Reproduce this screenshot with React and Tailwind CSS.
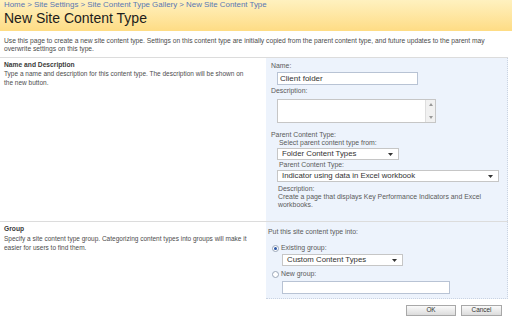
export default function App() {
  const body = "text-[6.5px] leading-[8.5px] text-[#4c4c4c] whitespace-nowrap";
  const label = "text-[6.9px] leading-[8px] text-[#5a5a5a]";

  const Select = ({ w, text }) => (
    <div
      className={`${w} h-[12px] bg-white border border-[#c6c6c6] flex items-center justify-between pl-[4px] pr-[5px]`}
    >
      <span className="text-[7.8px] text-[#333] leading-none">{text}</span>
      <svg width="5" height="3" viewBox="0 0 5 3">
        <path d="M0 0h5L2.5 3z" fill="#333" />
      </svg>
    </div>
  );

  const Radio = ({ on }) => (
    <span className="w-[7px] h-[7px] rounded-full border border-[#9aa6b8] bg-white flex items-center justify-center">
      {on && <span className="w-[3px] h-[3px] rounded-full bg-[#2a56a6]" />}
    </span>
  );

  return (
    <div
      className="w-[512px] h-[323px] bg-white overflow-hidden"
      style={{ fontFamily: '"Liberation Sans", Arial, sans-serif' }}
    >
      {/* Title band */}
      <div className="h-[31px] bg-gradient-to-b from-[#fff1bf] to-[#fedc84] px-[4px] pt-[1px]">
        <div className="text-[7.9px] leading-[8px] text-[#5977b4]">
          Home &gt; Site Settings &gt; Site Content Type Gallery &gt; New Site Content Type
        </div>
        <div className="text-[14px] leading-[18px] text-[#1c1c1c]">New Site Content Type</div>
      </div>

      {/* Intro */}
      <div className={`${body} text-[6.7px] leading-[8px] px-[4px] pt-[6px] h-[26px]`}>
        Use this page to create a new site content type. Settings on this content type are initially copied from the
        parent content type, and future updates to the parent may
        <br />
        overwrite settings on this type.
      </div>

      {/* Section 1 */}
      <div className="flex border-t border-[#dcdcdc] mr-[4px]">
        <div className="w-[266px] pl-[4px] pt-[3px]">
          <div className="text-[6.7px] leading-[8px] font-bold text-[#3a3a3a]">Name and Description</div>
          <div className={`${body} mt-[1px]`}>
            Type a name and description for this content type. The description will be shown on
            <br />
            the new button.
          </div>
        </div>
        <div className="flex-1 h-[163px] bg-[#edf3fc] border-r border-dotted border-[#c9d3e2] pl-[5px] pt-[4px]">
          <div className={label}>Name:</div>
          <div className="w-[141px] h-[13px] mt-[2px] ml-[6px] bg-white border border-[#b8c3d4] flex items-center pl-[2px]">
            <span className="text-[8px] leading-none text-[#333]">Client folder</span>
          </div>
          <div className={`${label} mt-[2px]`}>Description:</div>
          <div className="w-[159px] h-[24px] mt-[4px] ml-[6px] bg-white border border-[#c6c6c6] flex justify-end">
            <div className="w-[10px] bg-[#f1f1f1] border-l border-[#dedede] flex flex-col justify-between items-center py-[3px]">
              <svg width="4" height="3" viewBox="0 0 4 3">
                <path d="M0 3h4L2 0z" fill="#999" />
              </svg>
              <svg width="4" height="3" viewBox="0 0 4 3">
                <path d="M0 0h4L2 3z" fill="#999" />
              </svg>
            </div>
          </div>
          <div className={`${label} mt-[8px]`}>Parent Content Type:</div>
          <div className="ml-[6px]">
            <div className={`${label} pl-[2px]`}>Select parent content type from:</div>
            <div className="mt-[1px]">
              <Select w="w-[122px]" text="Folder Content Types" />
            </div>
            <div className={`${label} pl-[2px] mt-[1px]`}>Parent Content Type:</div>
            <div className="mt-[1px]">
              <Select w="w-[222px]" text="Indicator using data in Excel workbook" />
            </div>
            <div className={`${label} mt-[3px] pl-[1px]`}>Description:</div>
            <div className={`${label} leading-[6.5px] w-[224px] pl-[1px]`}>
              Create a page that displays Key Performance Indicators and Excel workbooks.
            </div>
          </div>
        </div>
      </div>

      {/* Section 2 */}
      <div className="flex border-t border-[#dcdcdc] mr-[4px]">
        <div className="w-[266px] pl-[4px] pt-[3px]">
          <div className="text-[6.7px] leading-[8px] font-bold text-[#3a3a3a]">Group</div>
          <div className={`${body} mt-[2px]`}>
            Specify a site content type group. Categorizing content types into groups will make it
            <br />
            easier for users to find them.
          </div>
        </div>
        <div className="flex-1 h-[77px] bg-[#edf3fc] border-r border-b border-dotted border-[#c9d3e2] pl-[2px] pt-[6px]">
          <div className={label}>Put this site content type into:</div>
          <div className="flex items-center gap-[2px] mt-[8px] ml-[4px]">
            <Radio on />
            <span className={label}>Existing group:</span>
          </div>
          <div className="ml-[14px] mt-[2px]">
            <Select w="w-[121px]" text="Custom Content Types" />
          </div>
          <div className="flex items-center gap-[2px] mt-[4px] ml-[4px]">
            <Radio />
            <span className={label}>New group:</span>
          </div>
          <div className="w-[168px] h-[13px] ml-[14px] mt-[3px] bg-white border border-[#b8c3d4]" />
        </div>
      </div>

      {/* Buttons */}
      <div className="flex justify-end gap-[5px] pr-[10px] pt-[6px]">
        <button className="w-[50px] h-[11px] bg-gradient-to-b from-[#fafafa] to-[#dcdcdc] border border-[#a8a8a8] text-[6.4px] leading-none text-[#333]">
          OK
        </button>
        <button className="w-[41px] h-[11px] bg-gradient-to-b from-[#fafafa] to-[#dcdcdc] border border-[#a8a8a8] text-[6.4px] leading-none text-[#333]">
          Cancel
        </button>
      </div>
    </div>
  );
}
